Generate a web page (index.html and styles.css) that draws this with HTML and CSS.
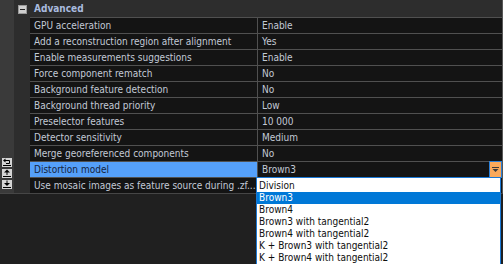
FILE: index.html
```html
<!DOCTYPE html>
<html>
<head>
<meta charset="utf-8">
<link rel="stylesheet" href="styles.css">
</head>
<body>
<div class="panel">
  <div class="top">
    <div class="gutter">
      <svg class="gicon" width="10" height="9" viewBox="0 0 10 9"><rect x="0" y="0" width="10" height="9" fill="#d4d4d4"/><path d="M3 2.5H7.5V5.5H4" fill="none" stroke="#000" stroke-width="1"/><path d="M1 2.5L3.5 0.5V4.5Z" fill="#000"/><path d="M1 7.5H9" stroke="#000" stroke-width="1"/></svg>
      <svg class="gicon" width="10" height="9" viewBox="0 0 10 9"><rect x="0" y="0" width="10" height="9" fill="#d4d4d4"/><path d="M5 0.5L8 3.5H2Z" fill="#000"/><path d="M5 3V6" stroke="#000" stroke-width="1"/><path d="M1 7.5H9" stroke="#000" stroke-width="1"/></svg>
      <svg class="gicon" width="10" height="9" viewBox="0 0 10 9"><rect x="0" y="0" width="10" height="9" fill="#d4d4d4"/><path d="M5 6L8 3H2Z" fill="#000"/><path d="M5 0.5V3.5" stroke="#000" stroke-width="1"/><path d="M1 7.5H9" stroke="#000" stroke-width="1"/></svg>
    </div>
    <div class="main">
      <div class="header">
        <span class="expander"><span class="minus"></span></span>
        <span class="title">Advanced</span>
      </div>
      <div class="rows">
        <div class="row"><div class="name">GPU acceleration</div><div class="value">Enable</div></div>
        <div class="row"><div class="name">Add a reconstruction region after alignment</div><div class="value">Yes</div></div>
        <div class="row"><div class="name">Enable measurements suggestions</div><div class="value">Enable</div></div>
        <div class="row"><div class="name">Force component rematch</div><div class="value">No</div></div>
        <div class="row"><div class="name">Background feature detection</div><div class="value">No</div></div>
        <div class="row"><div class="name">Background thread priority</div><div class="value">Low</div></div>
        <div class="row"><div class="name">Preselector features</div><div class="value">10 000</div></div>
        <div class="row"><div class="name">Detector sensitivity</div><div class="value">Medium</div></div>
        <div class="row"><div class="name">Merge georeferenced components</div><div class="value">No</div></div>
        <div class="row selected"><div class="name">Distortion model</div><div class="value"><span>Brown3</span><span class="dropbtn"><svg width="7" height="5" viewBox="0 0 7 5"><rect x="0" y="0" width="7" height="1" fill="#3a3a3a"/><path d="M0.5 2H6.5L3.5 5Z" fill="#3a3a3a"/></svg></span></div></div>
        <div class="row last"><div class="name">Use mosaic images as feature source during .zf...</div><div class="value"></div></div>
      </div>
    </div>
  </div>
  <div class="dropdown">
    <div class="item">Division</div>
    <div class="item hl">Brown3</div>
    <div class="item">Brown4</div>
    <div class="item">Brown3 with tangential2</div>
    <div class="item">Brown4 with tangential2</div>
    <div class="item">K + Brown3 with tangential2</div>
    <div class="item">K + Brown4 with tangential2</div>
  </div>
</div>
</body>
</html>
```
FILE: styles.css
```css
html, body {
  margin: 0;
  padding: 0;
}
body {
  width: 503px;
  height: 264px;
  overflow: hidden;
  background: #202020;
  font-family: "DejaVu Sans Condensed", "DejaVu Sans", sans-serif;
  font-stretch: condensed;
  font-size: 10px;
  color: #c3cad6;
}
.panel {
  position: relative;
  width: 503px;
  height: 264px;
  overflow: hidden;
}
.top {
  display: flex;
  height: 193px;
  border-bottom: 1px solid #464646;
}
.gutter {
  width: 14px;
  background: #3a3a3a;
  display: flex;
  flex-direction: column;
  justify-content: flex-end;
  align-items: center;
  gap: 2px;
  padding-bottom: 4px;
  box-sizing: border-box;
}
.gicon {
  display: block;
}
.main {
  flex: 1;
  background: #2d2d2d;
  border-right: 1px solid #575757;
  display: flex;
  flex-direction: column;
}
.header {
  height: 17px;
  display: flex;
  align-items: center;
}
.expander {
  width: 16px;
  display: flex;
  justify-content: center;
}
.minus {
  width: 9px;
  height: 9px;
  box-sizing: border-box;
  background: #cfcfcf;
  border: 1px solid #9a9a9a;
  position: relative;
  display: block;
  margin-top: 2px;
}
.minus::after {
  content: "";
  position: absolute;
  left: 1px;
  right: 1px;
  top: 3px;
  height: 1px;
  background: #222;
}
.title {
  margin-left: 4px;
  font-weight: bold;
  font-size: 10px;
  color: #a9bbdf;
}
.rows {
  margin-left: 16px;
  border-top: 1px solid #505050;
  flex: 1;
  background: #141414;
}
.row {
  display: flex;
  height: 15px;
  border-bottom: 1px solid #505050;
}
.row.last {
  border-bottom: none;
}
.name {
  width: 228px;
  padding-left: 4px;
  box-sizing: border-box;
  line-height: 15px;
  white-space: nowrap;
  overflow: hidden;
  border-right: 1px solid #505050;
}
.value {
  flex: 1;
  padding-left: 4px;
  line-height: 15px;
  display: flex;
  white-space: nowrap;
}
.selected .name {
  background: #55a0fa;
  color: #16233a;
}
.dropbtn {
  margin-left: auto;
  width: 11px;
  height: 15px;
  margin-top: -1px;
  border: 1px solid #2b7fd6;
  background: #fba95a;
  display: flex;
  align-items: center;
  justify-content: center;
}
.dropbtn svg {
  display: block;
}
.dropdown {
  position: absolute;
  left: 256px;
  top: 177px;
  width: 243px;
  height: 100px;
  background: #ffffff;
  border: 1px solid #1a78d4;
  padding-top: 2px;
  color: #0e0e0e;
}
.item {
  height: 12px;
  line-height: 12px;
  padding-left: 2px;
  white-space: nowrap;
}
.item.hl {
  background: #0078d7;
  color: #ffffff;
}
```
